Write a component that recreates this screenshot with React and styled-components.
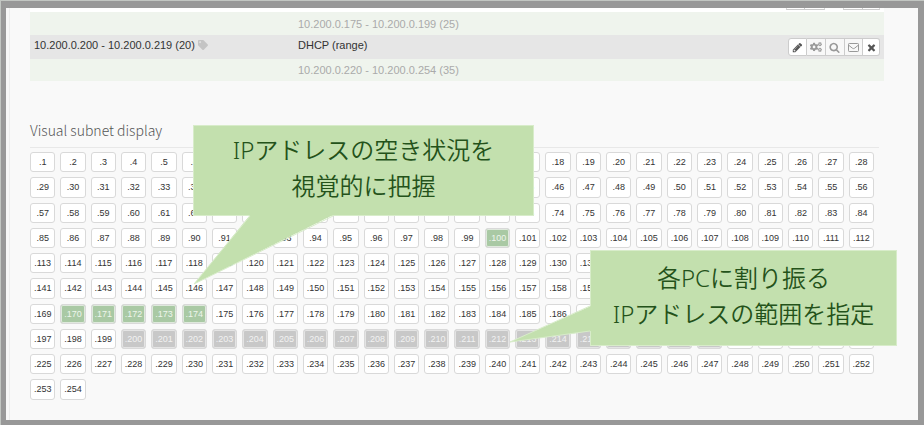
import React from 'react'
import styled, { createGlobalStyle, css } from 'styled-components'

import { FaCogs, FaTag } from 'react-icons/fa'

const GlobalStyle = createGlobalStyle`
    *, *::before, *::after {
        box-sizing: border-box;
    }
    body {
        margin: 0;
        border: solid #c2c6c2;
        border-width: 1px 0 0 1px;
        font-family: "Liberation Sans", Arial, sans-serif;
        font-size: 11px;
        color: #333;
    }
`

const TOTAL = 254
const USED = [100, 170, 171, 172, 173, 174]

// .200 - .219 is handed out by DHCP
const getStatus = (host) => {
    if (USED.includes(host)) return 'used'
    if (host >= 200 && host <= 219) return 'dhcp'
    return 'free'
}

const hosts = Array.from({ length: TOTAL }, (_, i) => i + 1)

const PencilIcon = () => (
    <svg viewBox="0 0 1792 1792" width="11" height="11" fill="currentColor">
        <path d="M491 1536l91-91-235-235-91 91v107h128v128h107zm523-928q0-22-22-22-10 0-17 7l-542 542q-7 7-7 17 0 22 22 22 10 0 17-7l542-542q7-7 7-17zm-54-192l416 416-832 832h-416v-416zm683 96q0 53-37 90l-166 166-416-416 166-165q36-38 90-38 53 0 91 38l235 234q37 39 37 91z" />
    </svg>
)

const SearchIcon = () => (
    <svg viewBox="0 0 1792 1792" width="11" height="11" fill="currentColor">
        <path d="M1216 832q0-185-131.5-316.5t-316.5-131.5-316.5 131.5-131.5 316.5 131.5 316.5 316.5 131.5 316.5-131.5 131.5-316.5zm512 832q0 52-38 90t-90 38q-54 0-90-38l-343-342q-179 124-399 124-143 0-273.5-55.5t-225-150-150-225-55.5-273.5 55.5-273.5 150-225 225-150 273.5-55.5 273.5 55.5 225 150 150 225 55.5 273.5q0 220-124 399l343 343q37 37 37 90z" />
    </svg>
)

const MailIcon = () => (
    <svg viewBox="0 0 11 11" width="11" height="11" fill="none" stroke="currentColor">
        <rect x="0.5" y="1.5" width="10" height="8" rx="0.8" />
        <path d="M0.7 3.2 L4.4 6.2 Q5.5 7 6.6 6.2 L10.3 3.2" />
    </svg>
)

const CloseIcon = () => (
    <svg viewBox="0 0 1792 1792" width="11" height="11" fill="currentColor">
        <path d="M1490 1322q0 40-28 68l-136 136q-28 28-68 28t-68-28l-294-294-294 294q-28 28-68 28t-68-28l-136-136q-28-28-28-68t28-68l294-294-294-294q-28-28-28-68t28-68l136-136q28-28 68-28t68 28l294 294 294-294q28-28 68-28t68 28l136 136q28 28 28 68t-28 68l-294 294 294 294q28 28 28 68z" />
    </svg>
)

const actions = [
    { label: 'Edit', icon: <PencilIcon />, width: 18 },
    { label: 'Ping', icon: <FaCogs size={12} />, width: 20, muted: true },
    { label: 'Search', icon: <SearchIcon />, width: 19, muted: true },
    { label: 'Mail', icon: <MailIcon />, width: 19, muted: true },
    { label: 'Delete', icon: <CloseIcon />, width: 17 },
]

const AddressTable = () => (
    <Table>
        <colgroup>
            <col className="address" />
            <col />
            <col className="actions" />
        </colgroup>
        <tbody>
            <PreviousRow>
                <td colSpan={3}>
                    <Clipped>
                        <ButtonGroup>
                            <Stub $width={18} />
                            <Stub $width={20} />
                        </ButtonGroup>
                        <ButtonGroup>
                            <Stub $width={19} />
                            <Stub $width={17} />
                        </ButtonGroup>
                    </Clipped>
                </td>
            </PreviousRow>
            <FreeRow $height={23}>
                <td></td>
                <td colSpan={2}>10.200.0.175 - 10.200.0.199 (25)</td>
            </FreeRow>
            <RangeRow>
                <td>10.200.0.200 - 10.200.0.219 (20) <FaTag size={10} /></td>
                <td>DHCP (range)</td>
                <td className="actions">
                    <ButtonGroup>
                        {actions.map(({ label, icon, width, muted }) => (
                            <ActionButton key={label} type="button" aria-label={label} $width={width} $muted={muted}>
                                {icon}
                            </ActionButton>
                        ))}
                    </ButtonGroup>
                </td>
            </RangeRow>
            <FreeRow $height={22}>
                <td></td>
                <td colSpan={2}>10.200.0.220 - 10.200.0.254 (35)</td>
            </FreeRow>
        </tbody>
    </Table>
)

const App = () => {
    return (
        <Frame>
            <GlobalStyle />
            <Content>
                <AddressTable />

                <Subnet>
                    <Title>Visual subnet display</Title>
                    <Grid>
                        {hosts.map((host) => (
                            <Host key={host} href={`#${host}`} $status={getStatus(host)}>.{host}</Host>
                        ))}
                    </Grid>

                    <StatusCallout>
                        <Tail viewBox="0 0 140 70" width="140" height="70">
                            <polygon points="57,0 1,69 140,0" />
                            <polyline points="57,1 1,69 140,1" />
                        </Tail>
                        IPアドレスの空き状況を<br />視覚的に把握
                    </StatusCallout>

                    <RangeCallout>
                        <Tail viewBox="0 0 82 38" width="82" height="38">
                            <polygon points="82,1 1,37 82,26" />
                            <polyline points="81,1 1,37 81,26" />
                        </Tail>
                        各PCに割り振る<br />IPアドレスの範囲を指定
                    </RangeCallout>
                </Subnet>
            </Content>
        </Frame>
    )
}

const Frame = styled.main`
    display: flex;
    min-height: calc(100vh - 1px);
    padding-left: 3px;
    background: #f7f7f7;
    border: solid #989898;
    border-width: 7px 6px 5px 5px;
`

const Content = styled.div`
    flex: 1;
    min-width: 0;
    padding: 0 34px 20px 20px;
    background: #f9f9f9;
    border-left: 1px solid #ececec;
`

const Table = styled.table`
    width: 100%;
    table-layout: fixed;
    border-collapse: collapse;

    .address {
        width: 264px;
    }
    .actions {
        width: 100px;
    }
    td {
        padding: 0 4px;
        line-height: 18px;
        text-align: left;
    }
`

const PreviousRow = styled.tr`
    height: 4px;
    background: #fff;
`

const Clipped = styled.div`
    display: flex;
    align-items: flex-start;
    justify-content: flex-end;
    gap: 18px;
    height: 4px;
    overflow: hidden;
`

const FreeRow = styled.tr`
    height: ${({ $height }) => $height}px;
    background: #eff4ed;
    color: #aaa;
`

const RangeRow = styled.tr`
    height: 24px;
    background: #e6e6e6;

    td {
        vertical-align: top;
        line-height: 20px;
    }
    .actions {
        vertical-align: middle;
    }
    td > svg {
        margin-bottom: -1px;
        color: #c4c4c4;
    }
`

const ButtonGroup = styled.div`
    display: flex;
    justify-content: flex-end;
`

const segment = css`
    width: ${({ $width }) => $width}px;
    background: #fff;
    border: 1px solid #ccc;
    border-left-width: 0;

    &:first-child {
        width: ${({ $width }) => $width + 1}px;
        border-left-width: 1px;
        border-radius: 3px 0 0 3px;
    }
    &:last-child {
        border-radius: 0 3px 3px 0;
    }
`

const Stub = styled.span`
    ${segment}
    height: 2px;
    border-top: 0;
`

const ActionButton = styled.button`
    ${segment}
    display: flex;
    align-items: center;
    justify-content: center;
    height: 18px;
    padding: 0;
    color: ${({ $muted }) => ($muted ? '#999' : '#555')};
    ${({ $muted }) => $muted && 'background: #f8f8f8;'}
`

const Subnet = styled.section`
    position: relative;
    margin-top: 39px;
    padding-right: 5px;
`

const Title = styled.h4`
    margin: 0 0 4px;
    padding-bottom: 7px;
    border-bottom: 1px solid #e8e8e8;
    font-family: "Noto Sans CJK JP", sans-serif;
    font-size: 14px;
    font-weight: 300;
    line-height: 20px;
    color: #555;
`

const Grid = styled.div`
    display: grid;
    grid-template-columns: repeat(28, 1fr);
    gap: 5px;
    padding-right: 5px;
`

const statusStyles = {
    free: css`
        background: #fff;
        color: #333;
    `,
    used: css`
        background: #a9c9a4;
        color: #eef5ec;
        box-shadow: inset 0 0 0 1px #dfe9dd;
    `,
    dhcp: css`
        background: #c8c8c8;
        color: #f2f2f2;
        box-shadow: inset 0 0 0 1px #e4e4e4;
    `,
}

const Host = styled.a`
    display: flex;
    align-items: center;
    justify-content: center;
    min-width: 0;
    aspect-ratio: 5 / 4;
    border: 1px solid #d9d9d9;
    border-radius: 3px;
    font-size: 9px;
    line-height: 12px;
    text-decoration: none;
    ${({ $status }) => statusStyles[$status]}
`

const Tail = styled.svg`
    position: absolute;
    overflow: visible;

    polygon {
        fill: #c3e0ae;
    }
    polyline {
        fill: none;
        stroke: #d8ecca;
    }
`

const Callout = styled.div`
    position: absolute;
    background: #c3e0ae;
    border: 1px solid #d8ecca;
    font-family: "Noto Sans", "Noto Sans CJK JP", sans-serif;
    font-size: 24px;
    font-weight: 350;
    line-height: 36px;
    text-align: center;
    color: #24521a;
`

const StatusCallout = styled(Callout)`
    top: 5px;
    left: 163px;
    width: 341px;
    padding: 6px 0 11px;

    ${Tail} {
        top: 89px;
        left: -1px;
    }
`

const RangeCallout = styled(Callout)`
    top: 130px;
    left: 560px;
    width: 307px;
    padding: 9px 0 13px;

    ${Tail} {
        top: 54px;
        left: -82px;
    }
`

export default App
